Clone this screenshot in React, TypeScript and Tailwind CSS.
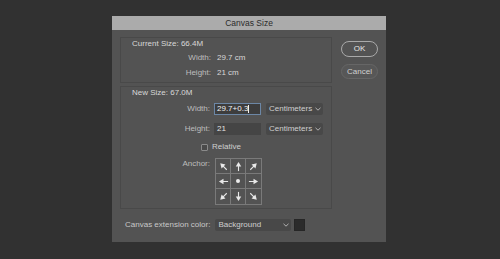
const font = { fontFamily: '"Liberation Sans", Arial, sans-serif' };

type ArrowProps = { rot: number };

const Arrow = ({ rot }: ArrowProps) => (
  <svg width="11" height="11" viewBox="0 0 12 12" style={{ transform: `rotate(${rot}deg)` }}>
    <line x1="6" y1="11" x2="6" y2="5" stroke="#e8e8e8" strokeWidth="1.2" />
    <polygon points="6,1 9,6 3,6" fill="#e8e8e8" />
  </svg>
);

const Chevron = () => (
  <svg width="6" height="4" viewBox="0 0 6 4">
    <path d="M0.5 0.8 L3 3.2 L5.5 0.8" fill="none" stroke="#bdbdbd" strokeWidth="0.9" />
  </svg>
);

const Select = ({ text, w }: { text: string; w: string }) => (
  <div className={`${w} h-[12px] bg-[#484848] rounded-[2px] flex items-center justify-between pl-[3px] pr-[2px] text-[8px] text-[#cfcfcf]`}>
    <span>{text}</span>
    <Chevron />
  </div>
);

const Cell = ({ children, r, b }: { children: React.ReactNode; r?: boolean; b?: boolean }) => (
  <div
    className={`w-[15px] h-[15px] flex items-center justify-center border-[#7a7a7a] ${r ? "border-r" : ""} ${b ? "border-b" : ""}`}
  >
    {children}
  </div>
);

export default function App() {
  return (
    <div className="w-[500px] h-[259px] bg-[#313131] pt-[16px] pl-[112px]" style={font}>
      <div className="w-[274px] h-[226px] bg-[#535353] flex flex-col">
        <div className="h-[14px] bg-[#ababab] flex items-center justify-center text-[8.5px] text-[#2b2b2b]">
          Canvas Size
        </div>

        <div className="flex pl-[8px] pt-[7px]">
          <div className="w-[212px] flex flex-col">
            {/* current size */}
            <div className="border border-[#494949] pt-[1px] pb-[3px] flex flex-col">
              <div className="pl-[11px] text-[8px] leading-[10px] text-[#d8d8d8]">Current Size: 66.4M</div>
              <div className="flex items-center h-[12px] mt-[3px] text-[8px]">
                <span className="w-[90px] text-right text-[#bdbdbd]">Width:</span>
                <span className="ml-[6px] text-[#d8d8d8]">29.7 cm</span>
              </div>
              <div className="flex items-center h-[12px] mt-[3px] text-[8px]">
                <span className="w-[90px] text-right text-[#bdbdbd]">Height:</span>
                <span className="ml-[6px] text-[#d8d8d8]">21 cm</span>
              </div>
            </div>

            {/* new size */}
            <div className="mt-[3px] border border-[#494949] pt-[1px] pb-[3px] flex flex-col">
              <div className="pl-[11px] text-[8px] leading-[10px] text-[#d8d8d8]">New Size: 67.0M</div>
              <div className="flex items-center h-[12px] mt-[5px] text-[8px]">
                <span className="w-[89px] text-right text-[#bdbdbd]">Width:</span>
                <div className="ml-[4px] w-[47px] h-[12px] bg-[#3d3d3d] border border-[#6c87a6] flex items-center pl-[2px] text-[#f2f2f2]">
                  29.7+0.3<span className="w-px h-[8px] bg-[#f2f2f2]" />
                </div>
                <div className="ml-[5px]">
                  <Select text="Centimeters" w="w-[57px]" />
                </div>
              </div>
              <div className="flex items-center h-[12px] mt-[8px] text-[8px]">
                <span className="w-[89px] text-right text-[#bdbdbd]">Height:</span>
                <div className="ml-[4px] w-[47px] h-[12px] bg-[#454545] flex items-center pl-[3px] text-[#e0e0e0]">
                  21
                </div>
                <div className="ml-[5px]">
                  <Select text="Centimeters" w="w-[57px]" />
                </div>
              </div>
              <div className="flex items-center h-[10px] mt-[7px] pl-[80px] text-[8px]">
                <div className="w-[7px] h-[7px] border border-[#8a8a8a] bg-[#4a4a4a] rounded-[1px]" />
                <span className="ml-[4px] text-[#cfcfcf]">Relative</span>
              </div>
              <div className="flex mt-[6px] text-[8px]">
                <span className="w-[89px] text-right text-[#bdbdbd] leading-[12px]">Anchor:</span>
                <div className="ml-[5px] border border-[#7a7a7a] grid grid-cols-3 w-[47px]">
                  <Cell r b><Arrow rot={-45} /></Cell>
                  <Cell r b><Arrow rot={0} /></Cell>
                  <Cell b><Arrow rot={45} /></Cell>
                  <Cell r b><Arrow rot={-90} /></Cell>
                  <Cell r b><div className="w-[4px] h-[4px] rounded-full bg-[#ececec]" /></Cell>
                  <Cell b><Arrow rot={90} /></Cell>
                  <Cell r><Arrow rot={-135} /></Cell>
                  <Cell r><Arrow rot={180} /></Cell>
                  <Cell><Arrow rot={135} /></Cell>
                </div>
              </div>
            </div>

            <div className="flex items-center h-[12px] mt-[10px] pl-[5px] text-[8px]">
              <span className="text-[#c8c8c8]">Canvas extension color:</span>
              <div className="ml-[5px]">
                <Select text="Background" w="w-[76px]" />
              </div>
              <div className="ml-[3px] w-[11px] h-[12px] bg-[#2b2b2b] border border-[#262626]" />
            </div>
          </div>

          <div className="ml-[9px] flex flex-col pt-[4px] text-[8px]">
            <div className="w-[37px] h-[16px] rounded-full border border-[#a9a9a9] flex items-center justify-center text-[#e6e6e6]">
              OK
            </div>
            <div className="mt-[7px] w-[37px] h-[15px] rounded-full border border-[#666666] bg-[#575757] flex items-center justify-center text-[#d0d0d0]">
              Cancel
            </div>
          </div>
        </div>
      </div>
    </div>
  );
}
